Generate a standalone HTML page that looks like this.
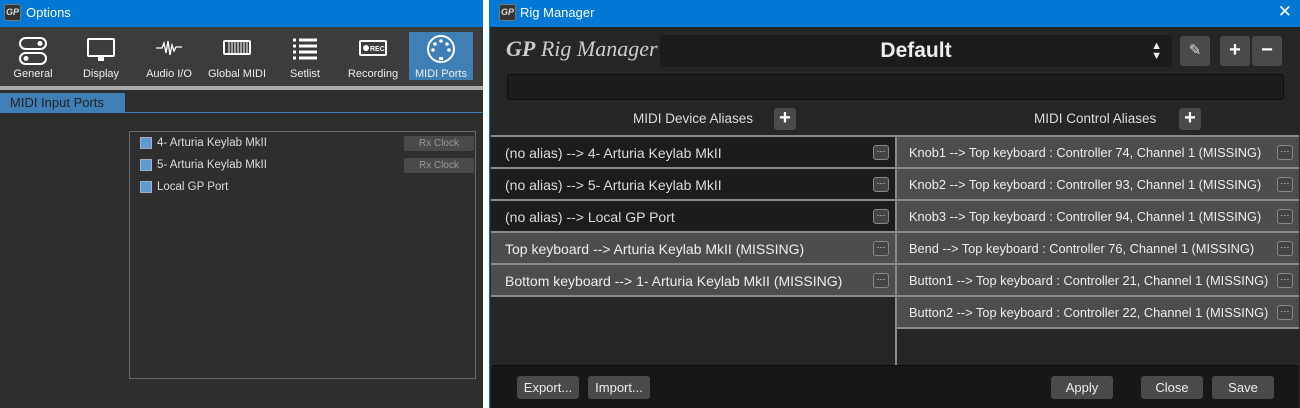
<!DOCTYPE html><html><head><style>
*{box-sizing:border-box;margin:0;padding:0}
body{width:1300px;height:408px;background:#fff;position:relative;overflow:hidden;font-family:"Liberation Sans",sans-serif;font-size:12px;color:#ddd}
.a{position:absolute}
.tb{background:#0078d4;color:#fff;font-size:13px;height:27px}
.ico{width:17px;height:17px;border-radius:3px;background:#333;border:1px solid #777;top:4px;color:#ddd;font-size:9px;text-align:center;line-height:15px;font-weight:bold;font-style:italic}
.tool{top:32px;width:64px;height:50px;text-align:center;font-size:11px;color:#eee}
.tool span{position:absolute;bottom:2px;left:0;right:0}
.row{height:32px;line-height:32px;padding-left:14px;font-size:14px;border-bottom:2px solid #8a8a8a;position:relative;white-space:nowrap}
.dk{background:#1c1c1c;color:#ddd}
.gr{background:#4d4d4d;color:#eee}
.dots{position:absolute;right:6px;top:8px;width:16px;height:15px;border:1px solid #888;border-radius:3px;background:#444;font-size:9px;line-height:10px;text-align:center;color:#eee}
.btn{background:#4a4a4a;border-radius:3px;color:#eee;font-size:13px;text-align:center;line-height:23px;height:23px;top:376px}
.pl{background:#4a4a4a;border-radius:3px;width:22px;height:22px;color:#fff;font-size:20px;font-weight:bold;text-align:center;line-height:21px}
</style></head><body>
<div class="a" style="left:0;top:0;width:483px;height:408px;background:#2e2e2e">
<div class="a tb" style="left:0;top:0;width:483px"><div class="a ico" style="left:4px">GP</div><div class="a" style="left:26px;top:5px">Options</div></div>
<div class="a" style="left:0;top:27px;width:483px;height:59px;background:#3c3c3c"></div>
<div class="a" style="left:409px;top:32px;width:64px;height:48px;background:#3f7fb6"></div>
<div class="a tool" style="left:1px"><svg width="30" height="32" style="margin-top:4px"><rect x="2" y="2" width="26" height="11" rx="5.5" fill="none" stroke="#fff" stroke-width="2"/><circle cx="22" cy="7.5" r="2.5" fill="#fff"/><rect x="2" y="17" width="26" height="11" rx="5.5" fill="none" stroke="#fff" stroke-width="2"/><circle cx="8" cy="22.5" r="2.5" fill="#fff"/></svg><span>General</span></div>
<div class="a tool" style="left:69px"><svg width="30" height="32" style="margin-top:4px"><rect x="2" y="3" width="26" height="17" rx="1" fill="none" stroke="#fff" stroke-width="2"/><rect x="12" y="21" width="6" height="4" fill="#fff"/></svg><span>Display</span></div>
<div class="a tool" style="left:137px"><svg width="30" height="32" style="margin-top:4px"><path d="M2 12h6l2-5 2 10 2-12 2 14 2-10 2 6 2-4h6" fill="none" stroke="#fff" stroke-width="1.3"/></svg><span>Audio I/O</span></div>
<div class="a tool" style="left:205px"><svg width="30" height="32" style="margin-top:4px"><rect x="2" y="5" width="26" height="13" rx="1" fill="none" stroke="#fff" stroke-width="2"/><path d="M7 6v11M10 6v11M13 6v11M16 6v11M19 6v11M22 6v11M25 6v11" stroke="#fff"/></svg><span>Global MIDI</span></div>
<div class="a tool" style="left:273px"><svg width="30" height="32" style="margin-top:4px"><path d="M3 4h3M9 4h18M3 10h3M9 10h18M3 16h3M9 16h18M3 22h3M9 22h18" stroke="#fff" stroke-width="3"/></svg><span>Setlist</span></div>
<div class="a tool" style="left:341px"><svg width="30" height="32" style="margin-top:4px"><rect x="2" y="5" width="26" height="14" rx="1" fill="none" stroke="#fff" stroke-width="2"/><circle cx="8" cy="12" r="3" fill="#fff"/><text x="12" y="15" font-size="7" fill="#fff" font-family="Liberation Sans" font-weight="bold">REC</text></svg><span>Recording</span></div>
<div class="a tool" style="left:409px"><svg width="30" height="32" style="margin-top:2px"><circle cx="15" cy="15" r="13" fill="none" stroke="#fff" stroke-width="2"/><circle cx="15" cy="7" r="1.8" fill="#fff"/><circle cx="9" cy="10" r="1.8" fill="#fff"/><circle cx="21" cy="10" r="1.8" fill="#fff"/><circle cx="7" cy="16" r="1.8" fill="#fff"/><circle cx="23" cy="16" r="1.8" fill="#fff"/><rect x="13" y="23" width="4" height="3" fill="#fff"/></svg><span>MIDI Ports</span></div>
<div class="a" style="left:0;top:86px;width:483px;height:4px;background:#aaa"></div>
<div class="a" style="left:0;top:93px;width:125px;height:19px;background:#3f7fb6;color:#222;font-size:13px;padding:2px 0 0 10px">MIDI Input Ports</div>
<div class="a" style="left:0;top:112px;width:483px;height:1px;background:#3f7fb6"></div>
<div class="a" style="left:129px;top:131px;width:347px;height:248px;border:1px solid #6a6a6a;background:#2e2e2e"></div>
<div class="a" style="left:140px;top:137px;width:12px;height:12px;background:#5f9ad0;border:1px solid #aac"></div><div class="a" style="left:157px;top:137px;font-size:11.5px">4- Arturia Keylab MkII</div>
<div class="a" style="left:140px;top:159px;width:12px;height:12px;background:#5f9ad0;border:1px solid #aac"></div><div class="a" style="left:157px;top:159px;font-size:11.5px">5- Arturia Keylab MkII</div>
<div class="a" style="left:140px;top:181px;width:12px;height:12px;background:#5f9ad0;border:1px solid #aac"></div><div class="a" style="left:157px;top:181px;font-size:11.5px">Local GP Port</div>
<div class="a" style="left:404px;top:136px;width:70px;height:15px;background:#4a4a4a;border-radius:2px;color:#999;font-size:10px;text-align:center;line-height:15px">Rx Clock</div>
<div class="a" style="left:404px;top:158px;width:70px;height:15px;background:#4a4a4a;border-radius:2px;color:#999;font-size:10px;text-align:center;line-height:15px">Rx Clock</div>
</div>
<div class="a" style="left:489px;top:0;width:811px;height:408px;background:#262626;border-left:1px solid #0078d4">
<div class="a tb" style="left:-1px;top:0;width:811px"><div class="a ico" style="left:10px">GP</div><div class="a" style="left:31px;top:5px">Rig Manager</div><div class="a" style="right:8px;top:2px;font-size:17px">✕</div></div>
<div class="a" style="left:16px;top:36px;font-size:22px;color:#ccc;font-style:italic;font-family:'Liberation Serif',serif"><b>GP</b> Rig Manager</div>
<div class="a" style="left:170px;top:35px;width:512px;height:32px;background:#1b1b1b;color:#eee;font-size:21px;font-weight:bold;text-align:center;line-height:32px">Default<span class="a" style="right:10px;top:0;font-size:11px;line-height:10px;padding-top:6px">▲<br>▼</span></div>
<div class="a" style="left:690px;top:36px;width:30px;height:30px;background:#4a4a4a;border-radius:3px;text-align:center;line-height:30px;color:#ddd;font-size:15px">✎</div>
<div class="a pl" style="left:730px;top:36px;width:30px;height:30px;line-height:29px">+</div>
<div class="a pl" style="left:762px;top:36px;width:30px;height:30px;line-height:29px">−</div>
<div class="a" style="left:17px;top:74px;width:777px;height:26px;background:#1c1c1c;border:1px solid #0e0e0e;border-radius:3px"></div>
<div class="a" style="left:143px;top:111px;font-size:13.5px;color:#ddd">MIDI Device Aliases</div><div class="a pl" style="left:284px;top:108px">+</div>
<div class="a" style="left:544px;top:111px;font-size:13.5px;color:#ddd">MIDI Control Aliases</div><div class="a pl" style="left:689px;top:108px">+</div>
<div class="a" style="left:1px;top:135px;width:404px;height:2px;background:#8a8a8a"></div>
<div class="a" style="left:407px;top:135px;width:402px;height:2px;background:#8a8a8a"></div>
<div class="a" style="left:405px;top:135px;width:2px;height:230px;background:#8a8a8a"></div>
<div class="a" style="left:1px;top:137px;width:404px">
<div class="row dk">(no alias) --&gt; 4- Arturia Keylab MkII<div class="dots">···</div></div>
<div class="row dk">(no alias) --&gt; 5- Arturia Keylab MkII<div class="dots">···</div></div>
<div class="row dk">(no alias) --&gt; Local GP Port<div class="dots">···</div></div>
<div class="row gr">Top keyboard --&gt; Arturia Keylab MkII (MISSING)<div class="dots">···</div></div>
<div class="row gr">Bottom keyboard --&gt; 1- Arturia Keylab MkII (MISSING)<div class="dots">···</div></div>
</div>
<div class="a" style="left:407px;top:137px;width:402px">
<div class="row gr" style="padding-left:12px;font-size:12.8px">Knob1 --&gt; Top keyboard : Controller 74, Channel 1 (MISSING)<div class="dots">···</div></div>
<div class="row gr" style="padding-left:12px;font-size:12.8px">Knob2 --&gt; Top keyboard : Controller 93, Channel 1 (MISSING)<div class="dots">···</div></div>
<div class="row gr" style="padding-left:12px;font-size:12.8px">Knob3 --&gt; Top keyboard : Controller 94, Channel 1 (MISSING)<div class="dots">···</div></div>
<div class="row gr" style="padding-left:12px;font-size:12.8px">Bend --&gt; Top keyboard : Controller 76, Channel 1 (MISSING)<div class="dots">···</div></div>
<div class="row gr" style="padding-left:12px;font-size:12.8px">Button1 --&gt; Top keyboard : Controller 21, Channel 1 (MISSING)<div class="dots">···</div></div>
<div class="row gr" style="padding-left:12px;font-size:12.8px">Button2 --&gt; Top keyboard : Controller 22, Channel 1 (MISSING)<div class="dots">···</div></div>
</div>
<div class="a" style="left:1px;top:365px;width:808px;height:43px;background:#171717;border-top:1px solid #0a0a0a;border-radius:4px 4px 0 0"></div>
<div class="a btn" style="left:27px;width:62px">Export...</div>
<div class="a btn" style="left:98px;width:62px">Import...</div>
<div class="a btn" style="left:561px;width:62px">Apply</div>
<div class="a btn" style="left:651px;width:62px">Close</div>
<div class="a btn" style="left:722px;width:62px">Save</div>
</div>
</body></html>
